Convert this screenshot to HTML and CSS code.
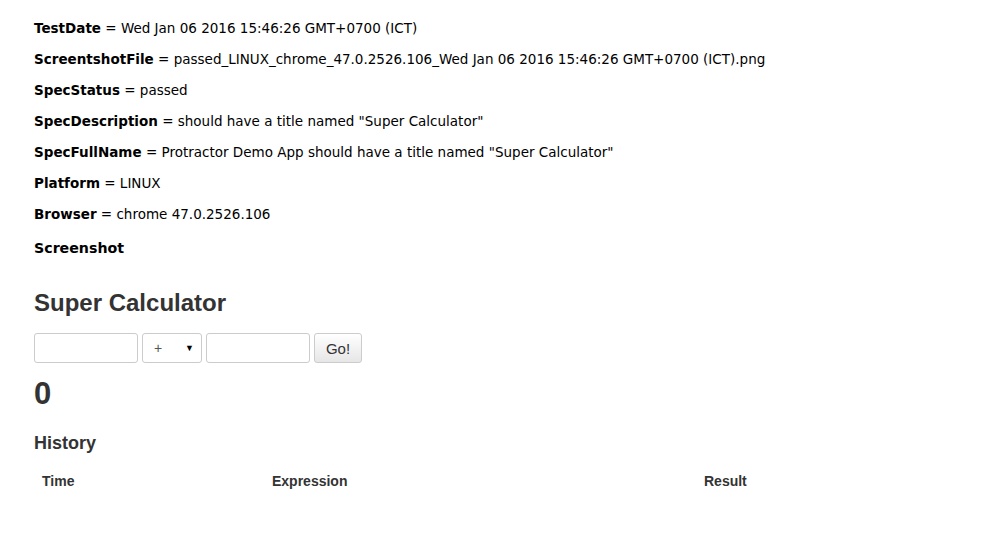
FILE: index.html
```html
<!DOCTYPE html>
<html>
<head>
<meta charset="utf-8">
<link rel="stylesheet" href="styles.css">
</head>
<body>
<div class="page">
  <div class="meta">
    <div class="row"><b>TestDate</b> = Wed Jan 06 2016 15:46:26 GMT+0700 (ICT)</div>
    <div class="row"><b>ScreentshotFile</b> = passed_LINUX_chrome_47.0.2526.106_Wed Jan 06 2016 15:46:26 GMT+0700 (ICT).png</div>
    <div class="row"><b>SpecStatus</b> = passed</div>
    <div class="row"><b>SpecDescription</b> = should have a title named "Super Calculator"</div>
    <div class="row"><b>SpecFullName</b> = Protractor Demo App should have a title named "Super Calculator"</div>
    <div class="row"><b>Platform</b> = LINUX</div>
    <div class="row"><b>Browser</b> = chrome 47.0.2526.106</div>
  </div>
  <div class="shot-title">Screenshot</div>
  <div class="app">
    <h3 class="app-title">Super Calculator</h3>
    <form class="calc">
      <input class="field" type="text">
      <div class="select"><span>+</span><span class="caret">▼</span></div>
      <input class="field" type="text">
      <button class="go" type="button">Go!</button>
    </form>
    <h2 class="result">0</h2>
    <h4 class="history">History</h4>
    <div class="thead">
      <div class="th th-time">Time</div>
      <div class="th th-expr">Expression</div>
      <div class="th th-res">Result</div>
    </div>
  </div>
</div>
</body>
</html>
```
FILE: styles.css
```css
html, body { margin: 0; padding: 0; background: #fff; }
.page { padding: 15px 0 0 34px; }
.meta { font-family: "DejaVu Sans", sans-serif; font-size: 13.5px; color: #000; }
.row { height: 31px; line-height: 26px; }
.row b { font-weight: bold; }
.shot-title { font-family: "DejaVu Sans", sans-serif; font-weight: bold; font-size: 14.2px; color: #000; margin-top: 5px; line-height: 22px; }
.app { font-family: "Liberation Sans", Arial, sans-serif; color: #333; }
.app-title { margin: 29px 0 0; font-size: 24px; font-weight: bold; line-height: 30px; }
.calc { display: flex; gap: 4px; margin-top: 15px; }
.field { box-sizing: border-box; width: 104px; height: 30px; border: 1px solid #ccc; border-radius: 3px; margin: 0; padding: 0; background: #fff; }
.select { box-sizing: border-box; width: 60px; height: 30px; border: 1px solid #ccc; border-radius: 3px; display: flex; align-items: center; justify-content: space-between; padding: 0 7px 0 11px; font-size: 14px; color: #555; }
.caret { font-size: 9px; color: #000; }
.go { box-sizing: border-box; width: 48px; height: 30px; border: 1px solid #ccc; border-radius: 3px; background: linear-gradient(#fff, #e6e6e6); font-family: "Liberation Sans", Arial, sans-serif; font-size: 15px; color: #333; padding: 0; }
.result { margin: 13px 0 0; font-size: 31px; font-weight: bold; line-height: 36px; }
.history { margin: 20px 0 0; font-size: 18px; font-weight: bold; line-height: 22px; }
.thead { display: flex; margin-top: 17px; font-size: 14px; font-weight: bold; line-height: 20px; }
.th { padding-left: 8px; }
.th-time { width: 230px; box-sizing: border-box; }
.th-expr { width: 432px; box-sizing: border-box; }
```
